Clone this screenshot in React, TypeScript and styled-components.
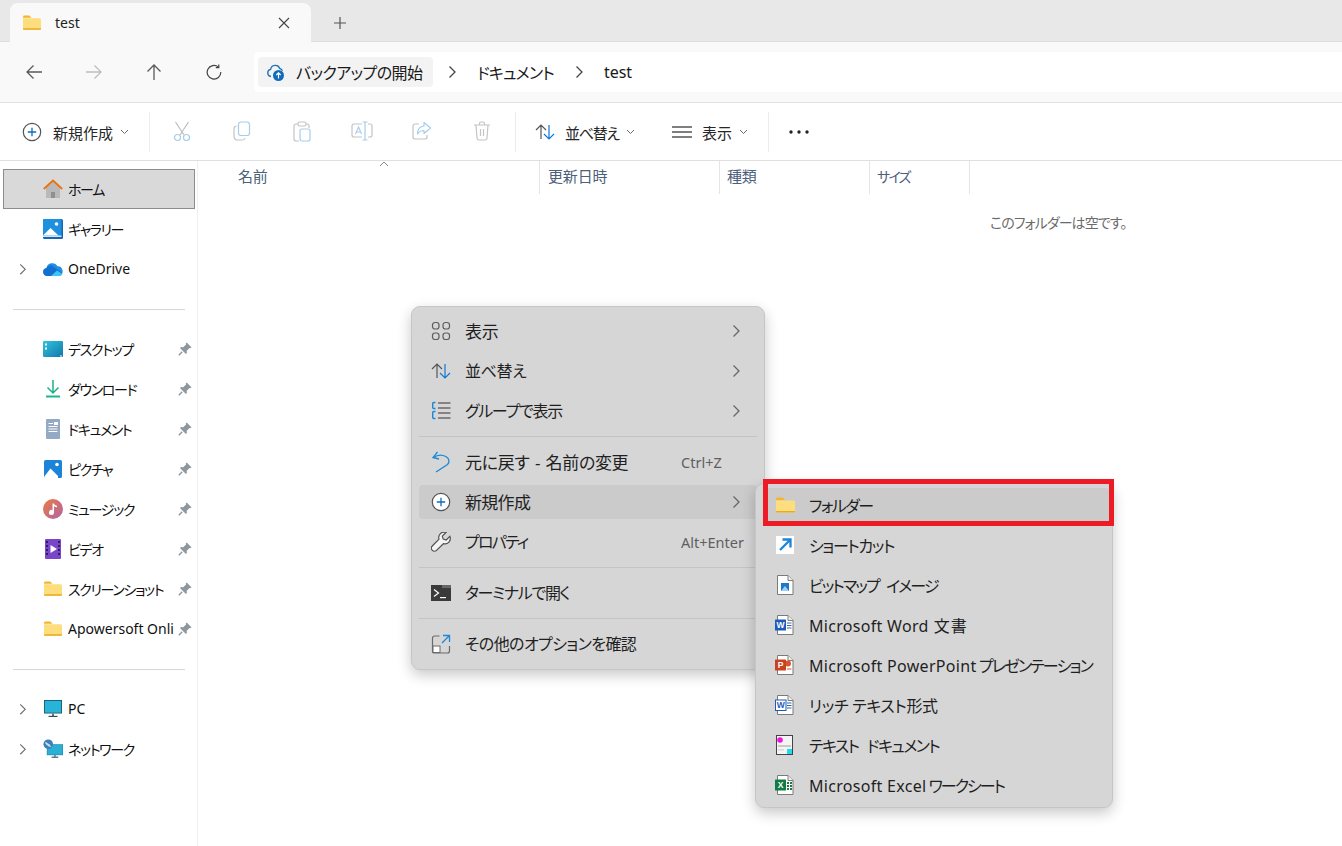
import React from 'react';
import styled, { createGlobalStyle } from 'styled-components';

const GlobalStyle = createGlobalStyle`
  html, body {
    margin: 0;
    padding: 0;
    overflow: hidden;
    background: #fff;
  }
  body {
    font-family: "Noto Sans", "Noto Sans CJK JP", sans-serif;
    font-feature-settings: "palt";
    color: #1a1a1a;
  }
`;

const Window = styled.div`
  position: relative;
  width: 1342px;
  height: 846px;
  display: flex;
  flex-direction: column;
  overflow: hidden;
`;

const TabBar = styled.div`
  height: 42px;
  flex: none;
  box-sizing: border-box;
  background: #e8e8e8;
  padding: 3px 0 0 10px;
  display: flex;
  align-items: stretch;
  border-bottom: 1px solid #dedede;
`;

const Tab = styled.div`
  width: 301px;
  height: 39px;
  box-sizing: border-box;
  background: #f9f9f9;
  border-radius: 8px 8px 0 0;
  padding: 0 21px 0 13px;
  display: flex;
  align-items: center;
`;

const TabTitle = styled.span`
  font-size: 14px;
  margin-left: 14px;
  flex: 1;
  color: #222;
`;

const NewTab = styled.div`
  margin-left: 20px;
  width: 18px;
  display: flex;
  align-items: center;
  justify-content: center;
  height: 39px;
`;

const NavBar = styled.div`
  height: 61px;
  flex: none;
  box-sizing: border-box;
  background: #f9f9f9;
  border-bottom: 1px solid #e0e0e0;
  display: flex;
  align-items: center;
  padding-left: 4px;
`;

const NavButton = styled.div`
  width: 60px;
  height: 40px;
  display: flex;
  align-items: center;
  justify-content: center;
`;

const AddressBar = styled.div`
  margin-left: 10px;
  flex: 1;
  height: 40px;
  background: #fff;
  border-radius: 4px 0 0 4px;
  display: flex;
  align-items: center;
  padding-left: 4px;
`;

const BackupPill = styled.div`
  width: 175px;
  height: 30px;
  box-sizing: border-box;
  background: #f3f3f3;
  border-radius: 4px;
  display: flex;
  align-items: center;
  padding-left: 8px;
  gap: 10px;
  font-size: 16px;
  letter-spacing: -0.6px;
  white-space: nowrap;
`;

const Crumb = styled.span<{ $left: number; $track?: number }>`
  margin-left: ${({ $left }) => $left}px;
  font-size: 16px;
  letter-spacing: ${({ $track = -0.8 }) => $track}px;
  white-space: nowrap;
  display: flex;
  align-items: center;
`;

const ToolBar = styled.div`
  height: 58px;
  flex: none;
  box-sizing: border-box;
  background: #fff;
  border-bottom: 1px solid #e0e0e0;
  display: flex;
  align-items: center;
  font-size: 15px;
`;

const ToolLabel = styled.div<{ $left: number; $width: number }>`
  margin-left: ${({ $left }) => $left}px;
  width: ${({ $width }) => $width}px;
  flex: none;
  display: flex;
  align-items: center;
  white-space: nowrap;
  color: #262626;
`;

const ToolText = styled.span<{ $gap: number; $track?: number }>`
  margin-left: ${({ $gap }) => $gap}px;
  margin-right: 7px;
  padding-top: 2px;
  letter-spacing: ${({ $track = 0 }) => $track}px;
`;

const ToolDivider = styled.div<{ $left: number }>`
  margin-left: ${({ $left }) => $left}px;
  width: 1px;
  height: 40px;
  flex: none;
  background: #ececec;
`;

const ToolIcons = styled.div`
  display: flex;
  flex: none;
  padding: 0 3px 0 2px;
`;

const ToolIcon = styled.div`
  width: 60px;
  flex: none;
  display: flex;
  justify-content: center;
`;

const Body = styled.div`
  flex: 1;
  display: flex;
  min-height: 0;
`;

const Sidebar = styled.nav`
  width: 198px;
  flex: none;
  box-sizing: border-box;
  padding-top: 8px;
  border-right: 1px solid #f0f0f0;
`;

const SideRow = styled.div<{ $active?: boolean; $latin?: boolean }>`
  height: 40px;
  box-sizing: border-box;
  margin-left: 3px;
  width: 192px;
  position: relative;
  display: flex;
  align-items: center;
  padding-left: ${({ $active }) => ($active ? 39 : 40)}px;
  font-size: 14px;
  letter-spacing: ${({ $latin }) => ($latin ? 0 : -1.35)}px;
  white-space: nowrap;
  color: #111;
  background: ${({ $active }) => ($active ? '#d9d9d9' : 'transparent')};
  border: ${({ $active }) => ($active ? '1px solid #8c8c8c' : 'none')};
`;

const SideIcon = styled.span`
  width: 20px;
  height: 20px;
  flex: none;
  margin-right: 5px;
  display: flex;
  align-items: center;
  justify-content: center;
`;

const SideLabel = styled.span`
  padding-bottom: 1px;
`;

const Expander = styled.span`
  position: absolute;
  left: 15px;
  top: 14px;
  display: flex;
`;

const PinMark = styled.span`
  position: absolute;
  right: 3px;
  top: 13px;
  display: flex;
`;

const SideRule = styled.div`
  height: 40px;
  display: flex;
  align-items: center;
  &::after {
    content: '';
    margin-left: 13px;
    width: 172px;
    height: 1px;
    background: #d6d6d6;
  }
`;

const Content = styled.main`
  flex: 1;
  min-width: 0;
`;

const Columns = styled.div`
  position: relative;
  display: grid;
  grid-template-columns: 342px 180px 150px 100px;
  height: 33px;
`;

const Column = styled.div<{ $pad: number; $track?: number; $size?: number }>`
  box-sizing: border-box;
  border-right: 1px solid #e5e5e5;
  display: flex;
  align-items: center;
  padding: 0 0 4px ${({ $pad }) => $pad}px;
  font-size: ${({ $size = 15 }) => $size}px;
  color: #4c607a;
  letter-spacing: ${({ $track = -0.15 }) => $track}px;
`;

const SortCaret = styled.span`
  position: absolute;
  left: 181px;
  top: 0;
  display: flex;
`;

const EmptyNote = styled.div`
  padding: 18px 0 0 792px;
  font-size: 14px;
  color: #6b6b6b;
  letter-spacing: -0.9px;
  white-space: nowrap;
`;

const Menu = styled.div`
  position: absolute;
  box-sizing: border-box;
  background: #d6d6d6;
  border-radius: 9px;
  border: 1px solid #c6c6c6;
  box-shadow: 0 5px 14px rgba(0, 0, 0, 0.22);
  display: flex;
  flex-direction: column;
  font-size: 16px;
  color: #1f1f1f;
  white-space: nowrap;
`;

const MainMenu = styled(Menu)`
  left: 411px;
  top: 306px;
  width: 354px;
  height: 364px;
  padding: 7px 7px 0;
  gap: 6px;
`;

const SubMenu = styled(Menu)`
  left: 755px;
  top: 483px;
  width: 358px;
  height: 325px;
  padding: 4px 2px 0 7px;
  gap: 6px;
`;

const MenuRow = styled.div<{ $on?: boolean; $marked?: boolean }>`
  position: relative;
  height: 34px;
  flex: none;
  display: grid;
  grid-template-columns: 46px 1fr 76px;
  align-items: center;
  border-radius: 4px;
  background: ${({ $on }) => ($on ? '#cbcbcb' : 'transparent')};
  ${({ $marked }) =>
    $marked &&
    `&::after {
      content: '';
      position: absolute;
      box-sizing: border-box;
      left: 0;
      right: -4px;
      top: -9px;
      bottom: -4px;
      border: 5px solid #ed1c24;
    }`}
`;

const SubRow = styled(MenuRow)`
  grid-template-columns: 46px 1fr;
`;

const MenuIcon = styled.span`
  width: 22px;
  height: 22px;
  margin-left: 11px;
  display: flex;
  align-items: center;
  justify-content: center;
`;

const MenuLabel = styled.span<{ $track?: number; $word?: number; $lift?: number; $size?: number }>`
  font-size: ${({ $size = 16 }) => $size}px;
  letter-spacing: ${({ $track = -0.35 }) => $track}px;
  word-spacing: ${({ $word = 0 }) => $word}px;
  padding-bottom: ${({ $lift = 0 }) => $lift}px;
`;

const Latin = styled.span`
  letter-spacing: 0.3px;
`;

const Shortcut = styled.span`
  font-size: 14.5px;
  color: #5f5f5f;
  letter-spacing: 0;
`;

const MenuChevron = styled.span`
  padding-left: 50px;
  display: flex;
`;

const MenuRule = styled.div`
  height: 1px;
  flex: none;
  margin: 2px 0;
  background: #c4c4c4;
`;

type IconProps = { size?: number };

const Chevron = ({ color = '#6b6b6b', size = 10 }: { color?: string; size?: number }) => (
  <svg width={size} height={size * 1.4} viewBox="0 0 10 14" fill="none">
    <path d="M2.5 1.5 8 7l-5.5 5.5" stroke={color} strokeWidth="1.3" />
  </svg>
);

const SmallDown = () => (
  <svg width="9" height="6" viewBox="0 0 9 6" fill="none">
    <path d="M1 1l3.5 3.5L8 1" stroke="#6a6a6a" strokeWidth="1" />
  </svg>
);

const Folder = ({ size = 18 }: IconProps) => (
  <svg width={size} height={size * 0.84} viewBox="0 0 19 16">
    <path d="M0 2a1.5 1.5 0 0 1 1.5-1.5h5L9 3H0z" fill="#f4b52a" />
    <path d="M0 3.5h17.5A1.5 1.5 0 0 1 19 5v9.5a1 1 0 0 1-1 1H1a1 1 0 0 1-1-1z" fill="#fedd7c" />
    <path d="M0 14h19v.7a.9.9 0 0 1-.9.8H.9a.9.9 0 0 1-.9-.8z" fill="#e9ab21" />
  </svg>
);

const Close = () => (
  <svg width="12" height="12" viewBox="0 0 12 12" fill="none">
    <path d="M1 1l10 10M11 1 1 11" stroke="#444" strokeWidth="1.1" />
  </svg>
);

const Plus = () => (
  <svg width="12" height="12" viewBox="0 0 12 12" fill="none">
    <path d="M6 0v12M0 6h12" stroke="#555" strokeWidth="1.2" />
  </svg>
);

const ArrowLeft = ({ color = '#5a5a5a' }: { color?: string }) => (
  <svg width="18" height="16" viewBox="0 0 18 16" fill="none">
    <path d="M17 8H2M8.5 1.5 2 8l6.5 6.5" stroke={color} strokeWidth="1.3" />
  </svg>
);

const ArrowRight = () => (
  <svg width="18" height="16" viewBox="0 0 18 16" fill="none">
    <path d="M1 8h15M9.5 1.5 16 8l-6.5 6.5" stroke="#bdbdbd" strokeWidth="1.3" />
  </svg>
);

const ArrowUp = () => (
  <svg width="16" height="18" viewBox="0 0 16 18" fill="none">
    <path d="M8 17V2M1.5 8.5 8 2l6.5 6.5" stroke="#5a5a5a" strokeWidth="1.3" />
  </svg>
);

const Refresh = () => (
  <svg width="16" height="16" viewBox="0 0 16 16" fill="none">
    <path d="M12.4 3.1A6.8 6.8 0 1 0 14.8 8" stroke="#444" strokeWidth="1.2" />
    <path d="M12.8.6v3h-3" stroke="#444" strokeWidth="1.2" />
  </svg>
);

const CloudUp = () => (
  <svg width="20" height="20" viewBox="0 0 20 20" fill="none">
    <path d="M5 14.5a3.6 3.6 0 0 1-.4-7.1 4.8 4.8 0 0 1 9.2-.9 3.6 3.6 0 0 1 2.6 2.2" stroke="#1f6fb8" strokeWidth="1.3" />
    <circle cx="12.5" cy="13.5" r="5.5" fill="#0f6cbd" />
    <path d="M12.5 16.5v-5.5M10.3 13l2.2-2.2 2.2 2.2" stroke="#fff" strokeWidth="1.2" />
  </svg>
);

const PlusCircle = ({ fill = 'none' }: { fill?: string }) => (
  <svg width="20" height="20" viewBox="0 0 20 20" fill="none">
    <circle cx="10" cy="10" r="8.7" stroke="#555" strokeWidth="1.2" fill={fill} />
    <path d="M10 5.8v8.4M5.8 10h8.4" stroke="#0f6cbd" strokeWidth="1.3" />
  </svg>
);

const Scissors = () => (
  <svg width="18" height="21" viewBox="0 0 18 21" fill="none">
    <path d="M2.5 1 11 14M15.5 1 7 14" stroke="#bdbdbd" strokeWidth="1.2" />
    <circle cx="4.5" cy="16.5" r="3" stroke="#a5cdec" strokeWidth="1.2" />
    <circle cx="13.5" cy="16.5" r="3" stroke="#a5cdec" strokeWidth="1.2" />
  </svg>
);

const Copy = () => (
  <svg width="18" height="20" viewBox="0 0 18 20" fill="none">
    <rect x="5.5" y="1" width="11" height="13.5" rx="2.5" stroke="#a5cdec" strokeWidth="1.2" />
    <path d="M3.5 5A2.5 2.5 0 0 0 1 7.5v8A3.5 3.5 0 0 0 4.5 19h5a2.5 2.5 0 0 0 2.5-2" stroke="#c4c4c4" strokeWidth="1.2" />
  </svg>
);

const Paste = () => (
  <svg width="18" height="21" viewBox="0 0 18 21" fill="none">
    <path d="M5 3H3a2 2 0 0 0-2 2v13a2 2 0 0 0 2 2h3M13 3h1a2 2 0 0 1 2 2v2" stroke="#c4c4c4" strokeWidth="1.2" />
    <rect x="5" y="1" width="8" height="4" rx="1.5" stroke="#c4c4c4" strokeWidth="1.2" />
    <rect x="7" y="8" width="10" height="12" rx="2" stroke="#a5cdec" strokeWidth="1.2" />
  </svg>
);

const Rename = () => (
  <svg width="22" height="20" viewBox="0 0 22 20" fill="none">
    <path d="M11 3H3a2 2 0 0 0-2 2v9a2 2 0 0 0 2 2h8M17 3h2a2 2 0 0 1 2 2v9a2 2 0 0 1-2 2h-2" stroke="#c4c4c4" strokeWidth="1.2" />
    <path d="M14 1v18M11.5 1h5M11.5 19h5" stroke="#a5cdec" strokeWidth="1.2" />
    <path d="M4.5 13 7.5 6l3 7M5.5 11h4" stroke="#a5cdec" strokeWidth="1.1" />
  </svg>
);

const Share = () => (
  <svg width="20" height="20" viewBox="0 0 20 20" fill="none">
    <path d="M7 3H3a2 2 0 0 0-2 2v11a2 2 0 0 0 2 2h10a2 2 0 0 0 2-2v-2" stroke="#c4c4c4" strokeWidth="1.2" />
    <path d="M12 1.5 18.5 7 12 12.5V9.5C9 9.5 7 10.5 5.5 13c0-4.5 2.5-7.500 6.5-8z" stroke="#a5cdec" strokeWidth="1.2" strokeLinejoin="round" />
  </svg>
);

const Trash = () => (
  <svg width="18" height="20" viewBox="0 0 18 20" fill="none">
    <path d="M1 4h16M6.5 4V2.5A1.5 1.5 0 0 1 8 1h2a1.5 1.5 0 0 1 1.5 1.5V4" stroke="#c4c4c4" strokeWidth="1.2" />
    <path d="M3 4l1 13.2A2 2 0 0 0 6 19h6a2 2 0 0 0 2-1.8L15 4" stroke="#c4c4c4" strokeWidth="1.2" />
    <path d="M7.5 8v7M10.5 8v7" stroke="#c4c4c4" strokeWidth="1.2" />
  </svg>
);

const SortArrows = () => (
  <svg width="20" height="18" viewBox="0 0 20 18" fill="none">
    <path d="M6 16V2M1 7l5-5 5 5" stroke="#555" strokeWidth="1.2" />
    <path d="M14 2v14M9 11l5 5 5-5" stroke="#0f78d4" strokeWidth="1.2" />
  </svg>
);

const Lines = () => (
  <svg width="20" height="12" viewBox="0 0 20 12" fill="none">
    <path d="M0 1h20M0 6h20M0 11h20" stroke="#555" strokeWidth="1.3" />
  </svg>
);

const Dots = () => (
  <svg width="20" height="4" viewBox="0 0 20 4">
    <circle cx="2" cy="2" r="1.7" fill="#222" />
    <circle cx="10" cy="2" r="1.7" fill="#222" />
    <circle cx="18" cy="2" r="1.7" fill="#222" />
  </svg>
);

const Home = () => (
  <svg width="20" height="20" viewBox="0 0 20 20" fill="none">
    <path d="M3 9 10 2.5 17 9v10H3z" fill="#b9b9b9" />
    <path d="M8 19v-6h4v6z" fill="#8f8f8f" />
    <path d="M.8 10 10 1.5 19.2 10" stroke="#e8740f" strokeWidth="1.9" />
  </svg>
);

const Gallery = () => (
  <svg width="20" height="20" viewBox="0 0 20 20">
    <rect width="20" height="20" rx="1.5" fill="#1567b3" />
    <rect width="18.5" height="18" rx="1" fill="#1f8fe0" />
    <circle cx="13.5" cy="5" r="1.8" fill="#fff" />
    <path d="M0 16.5 7.5 9l8 7.5z" fill="#fff" />
    <path d="M0 16.5h18.5V18H0z" fill="#cfe6f8" />
  </svg>
);

const Cloud = () => (
  <svg width="20" height="14" viewBox="0 0 20 14">
    <path d="M4 14a4 4 0 0 1-.6-7.9A6 6 0 0 1 14.5 4.2 5 5 0 0 1 16 14z" fill="#1c8fe8" />
    <path d="M4 14a4 4 0 0 1-2.9-6.7L8 3l11.2 8A4.5 4.5 0 0 1 16 14z" fill="#0f5fc4" opacity=".65" />
    <path d="M8 14 14 8.5l5.5 3.5A4 4 0 0 1 16 14z" fill="#3ec4f5" />
  </svg>
);

const Desktop = () => (
  <svg width="20" height="16" viewBox="0 0 20 16">
    <defs>
      <linearGradient id="deskGrad" x1="0" y1="0" x2="1" y2="1">
        <stop offset="0" stopColor="#2fc5dc" />
        <stop offset="1" stopColor="#1277ab" />
      </linearGradient>
    </defs>
    <rect width="20" height="16" rx="1" fill="url(#deskGrad)" />
    <rect x="2" y="2.5" width="2" height="2" fill="#fff" />
    <rect x="2" y="6.5" width="2" height="2" fill="#fff" />
    <rect x="17" y="14.5" width="2" height="1" fill="#fff" />
  </svg>
);

const Download = () => (
  <svg width="16" height="18" viewBox="0 0 16 18" fill="none">
    <path d="M8 0v12.5M2.5 7.5 8 13l5.5-5.5" stroke="#1fae87" strokeWidth="1.5" />
    <path d="M1 16.5h14" stroke="#1fb58f" strokeWidth="2" />
  </svg>
);

const DocIcon = () => (
  <svg width="14" height="20" viewBox="0 0 14 20">
    <rect width="14" height="20" rx="1" fill="#93a9c4" />
    <path d="M8 3h4v3H8z" fill="#fff" />
    <path d="M2.5 4H7v1H2.5zM2.5 7h9v1h-9zM2.5 9.5h9v1h-9zM2.5 12h9v1h-9z" fill="#fff" />
  </svg>
);

const Pictures = () => (
  <svg width="18" height="18" viewBox="0 0 18 18">
    <rect width="18" height="18" rx="1.5" fill="#1b84d8" />
    <circle cx="13" cy="4.5" r="1.8" fill="#fff" />
    <path d="M0 17 6.5 8.5 14 16v2H1a1 1 0 0 1-1-1z" fill="#fff" />
  </svg>
);

const Music = () => (
  <svg width="20" height="20" viewBox="0 0 20 20">
    <defs>
      <linearGradient id="musicGrad" x1="0" y1="0" x2="1" y2="1">
        <stop offset="0" stopColor="#ea7b3f" />
        <stop offset="1" stopColor="#b364a8" />
      </linearGradient>
    </defs>
    <circle cx="10" cy="10" r="10" fill="url(#musicGrad)" />
    <path d="M9.5 4.5H11c.3 1.5 1.5 2 3 2.2v1.5c-1.2 0-2.2-.4-3-1v6.300a2.5 2.5 0 1 1-1.5-2.3z" fill="#fff" />
  </svg>
);

const Video = () => (
  <svg width="16" height="20" viewBox="0 0 16 20">
    <rect width="16" height="20" rx="1" fill="#7a45c9" />
    <path d="M5.5 6 12 10l-6.5 4z" fill="#fff" />
    <path d="M1 2h2v2H1zM1 6h2v2H1zM1 10h2v2H1zM1 14h2v2H1zM13 2h2v2h-2zM13 6h2v2h-2zM13 10h2v2h-2zM13 14h2v2h-2z" fill="#2f1c63" />
  </svg>
);

const Pin = () => (
  <svg width="14" height="14" viewBox="0 0 14 14">
    <path d="M8.7.6 13.4 5.300 12.500 6.200 11.600 5.900 8.700 8.800 8.900 11 7.900 12 2 6.100 3 5.100 5.200 5.300 8.100 2.400 7.800 1.500z" fill="#8f979e" />
    <path d="M4.2 9.800.8 13.200" stroke="#8f979e" strokeWidth="1.4" />
  </svg>
);

const Monitor = ({ size = 18 }: IconProps) => (
  <svg width={size} height={size} viewBox="0 0 18 18">
    <rect width="18" height="13.5" fill="#1f4f63" />
    <rect x=".8" y=".8" width="16.4" height="11.9" fill="#26b4d8" />
    <path d="M8 13.5h2V16H8z" fill="#5f7784" />
    <path d="M4.5 15.8h9V17h-9z" fill="#33505e" />
  </svg>
);

const Network = () => (
  <svg width="21" height="20" viewBox="0 0 21 20">
    <rect x="4" y="5" width="17" height="11.5" fill="#1f8db4" />
    <rect x="4.7" y="5.7" width="15.6" height="10.1" fill="#2ab0d4" />
    <path d="M11.5 16.5h2V18h-2z" fill="#5f7784" />
    <path d="M9 18h7v1.2H9z" fill="#33505e" />
    <circle cx="5.5" cy="5" r="5" fill="#3f7fb5" />
    <path d="M2.5 2.5 6.5 5 9 8l-3-.5-3.500-3z" fill="#cfe0ee" />
  </svg>
);

const Grid = () => (
  <svg width="20" height="20" viewBox="0 0 20 20" fill="none" stroke="#5d5d5d" strokeWidth="1.2">
    <rect x="1.5" y="1.5" width="6.5" height="6.5" rx="2.5" />
    <rect x="12" y="1.5" width="6.5" height="6.5" rx="2.5" />
    <rect x="1.5" y="12" width="6.5" height="6.5" rx="2.5" />
    <rect x="12" y="12" width="6.5" height="6.5" rx="2.5" />
  </svg>
);

const GroupList = () => (
  <svg width="20" height="20" viewBox="0 0 20 20" fill="none">
    <path d="M4.5 1.5H2.700a1 1 0 0 0-1 1v4a1 1 0 0 0 1 1h1.800M4.500 10.500H2.700a1 1 0 0 0-1 1v5a1 1 0 0 0 1 1h1.800" stroke="#1c86d8" strokeWidth="1.4" />
    <path d="M7 2h12.500M7 7h12.500M7 12h12.500M7 17h12.500" stroke="#6a6a6a" strokeWidth="1.3" />
  </svg>
);

const Undo = () => (
  <svg width="20" height="22" viewBox="0 0 20 22" fill="none">
    <path d="M6.5 1 2 6.5 8 8" stroke="#1c86d8" strokeWidth="1.3" />
    <path d="M2.5 6.5C6 4 11 3.500 14.800 5.500c3.700 2 4 5.500 1.700 8L5 21" stroke="#1c86d8" strokeWidth="1.3" />
  </svg>
);

const Wrench = () => (
  <svg width="20" height="20" viewBox="0 0 20 20" fill="#f4f4f4">
    <path d="M18.8 4.300 15.200 8l-3-.9-.9-3L15 .5a5.400 5.400 0 0 0-7 6.700L1.300 14a2.800 2.800 0 0 0 0 4.300 2.900 2.900 0 0 0 4.200.1l6.900-6.700a5.400 5.400 0 0 0 6.400-7.400z" stroke="#505050" strokeWidth="1.2" />
  </svg>
);

const Terminal = () => (
  <svg width="20" height="16" viewBox="0 0 20 16">
    <rect width="20" height="16" fill="#3a3a3a" />
    <rect x="11" width="9" height="3" fill="#666" />
    <path d="M3 4.5 7.500 8 3 11.500" fill="none" stroke="#fff" strokeWidth="1.2" />
    <path d="M9 12h6v1.200H9z" fill="#fff" />
  </svg>
);

const MoreOptions = () => (
  <svg width="20" height="20" viewBox="0 0 20 20" fill="none">
    <path d="M8.5 2h-5a2 2 0 0 0-2 2v13a2 2 0 0 0 2 2h13a2 2 0 0 0 2-2v-5" stroke="#6a6a6a" strokeWidth="1.2" />
    <rect x="2" y="12" width="7" height="6.5" fill="#fff" stroke="#6a6a6a" strokeWidth="1" />
    <path d="M12 1.5h6.500V8M18.500 1.500 11 9" stroke="#1c86d8" strokeWidth="1.3" />
  </svg>
);

const ShortcutArrow = () => (
  <svg width="18" height="18" viewBox="0 0 18 18">
    <rect width="18" height="18" fill="#fff" />
    <path d="M4 14 13.500 4.500M6.500 3.500h8v8" fill="none" stroke="#1b86d8" strokeWidth="2.3" />
  </svg>
);

const PageBase = ({ children }: { children?: React.ReactNode }) => (
  <svg width="20" height="20" viewBox="0 0 20 20">
    <path d="M2.5.5H13l5 5v14H2.500z" fill="#fff" stroke="#7b7b7b" strokeWidth="1" />
    <path d="M13 .5v5h5" fill="#eee" stroke="#7b7b7b" strokeWidth="1" />
    {children}
  </svg>
);

const Bitmap = () => (
  <PageBase>
    <rect x="6" y="8" width="8" height="8" fill="#1f78c8" />
    <path d="M6 16 10 11l4 5z" fill="#9cd0f5" />
  </PageBase>
);

const WordDoc = () => (
  <PageBase>
    <path d="M12 8h4.500M12 10.500h4.500M12 13h4.500" stroke="#2f65b5" strokeWidth="1" />
    <rect x="0" y="4.500" width="11" height="11" rx=".5" fill="#1c5bb8" />
    <text x="5.5" y="13" fontSize="8.5" fontWeight="700" fill="#fff" textAnchor="middle" fontFamily="Liberation Sans">W</text>
  </PageBase>
);

const PptDoc = () => (
  <PageBase>
    <circle cx="13" cy="8.500" r="3" fill="#d9552b" />
    <path d="M12 14h4.500" stroke="#d9552b" strokeWidth="1" />
    <rect x="0" y="4.500" width="11" height="11" rx=".5" fill="#c8421e" />
    <text x="5.5" y="13" fontSize="8.5" fontWeight="700" fill="#fff" textAnchor="middle" fontFamily="Liberation Sans">P</text>
  </PageBase>
);

const RtfDoc = () => (
  <PageBase>
    <path d="M12 8h4.500M12 10.500h4.500M12 13h4.500" stroke="#2f65b5" strokeWidth="1" />
    <rect x=".5" y="5" width="10.500" height="10.500" fill="#fff" stroke="#1c5bb8" strokeWidth="1" />
    <text x="5.7" y="13" fontSize="8.5" fontWeight="700" fill="#1c5bb8" textAnchor="middle" fontFamily="Liberation Sans">W</text>
  </PageBase>
);

const TextDoc = () => (
  <svg width="18" height="20" viewBox="0 0 18 20">
    <rect x=".5" y=".5" width="16" height="19" fill="#f4f4f4" stroke="#444" strokeWidth="1" />
    <circle cx="4" cy="5" r="2.8" fill="#f012e0" />
    <rect x="2" y="10" width="13" height="2" fill="#c9c9c9" />
    <rect x="2" y="14" width="6" height="1.5" fill="#d8d8d8" />
    <rect x="11" y="14" width="5" height="5" fill="#18dff0" />
  </svg>
);

const ExcelDoc = () => (
  <PageBase>
    <path d="M12 7h2v2h-2zM15 7h2v2h-2zM12 10h2v2h-2zM15 10h2v2h-2zM12 13h2v2h-2zM15 13h2v2h-2z" fill="#1d7a46" />
    <rect x="0" y="4.500" width="11" height="11" rx=".5" fill="#107c41" />
    <text x="5.5" y="13" fontSize="8.5" fontWeight="700" fill="#fff" textAnchor="middle" fontFamily="Liberation Sans">X</text>
  </PageBase>
);

type SideItem = {
  label?: string;
  icon?: React.ReactNode;
  pinned?: boolean;
  expandable?: boolean;
  active?: boolean;
  latin?: boolean;
};

const sideItems: SideItem[] = [
  { label: 'ホーム', icon: <Home />, active: true },
  { label: 'ギャラリー', icon: <Gallery /> },
  { label: 'OneDrive', icon: <Cloud />, expandable: true, latin: true },
  {},
  { label: 'デスクトップ', icon: <Desktop />, pinned: true },
  { label: 'ダウンロード', icon: <Download />, pinned: true },
  { label: 'ドキュメント', icon: <DocIcon />, pinned: true },
  { label: 'ピクチャ', icon: <Pictures />, pinned: true },
  { label: 'ミュージック', icon: <Music />, pinned: true },
  { label: 'ビデオ', icon: <Video />, pinned: true },
  { label: 'スクリーンショット', icon: <Folder />, pinned: true },
  { label: 'Apowersoft Onli', icon: <Folder />, pinned: true, latin: true },
  {},
  { label: 'PC', icon: <Monitor />, expandable: true, latin: true },
  { label: 'ネットワーク', icon: <Network />, expandable: true },
];

type MenuItem = {
  label?: string;
  icon?: React.ReactNode;
  more?: boolean;
  keys?: string;
  on?: boolean;
  word?: number;
  track?: number;
  size?: number;
};

const menuItems: MenuItem[] = [
  { label: '表示', icon: <Grid />, more: true, size: 17 },
  { label: '並べ替え', icon: <SortArrows />, more: true },
  { label: 'グループで表示', icon: <GroupList />, more: true, track: -1.25 },
  {},
  { label: '元に戻す - 名前の変更', icon: <Undo />, keys: 'Ctrl+Z', word: 1.5, size: 17 },
  { label: '新規作成', icon: <PlusCircle fill="#fff" />, more: true, on: true, size: 17, track: -0.7 },
  { label: 'プロパティ', icon: <Wrench />, keys: 'Alt+Enter', track: -1.75 },
  {},
  { label: 'ターミナルで開く', icon: <Terminal />, track: -1.35 },
  {},
  { label: 'その他のオプションを確認', icon: <MoreOptions />, track: -0.6 },
];

const newItems: { label: React.ReactNode; icon: React.ReactNode; track?: number; word?: number }[] = [
  { label: 'フォルダー', icon: <Folder size={19} />, track: -1.55 },
  { label: 'ショートカット', icon: <ShortcutArrow />, track: -1.35 },
  { label: 'ビットマップ イメージ', icon: <Bitmap />, track: -1.9, word: 5 },
  { label: <><Latin>Microsoft Word</Latin> 文書</>, icon: <WordDoc />, track: 1 },
  { label: <><Latin>Microsoft PowerPoint</Latin> プレゼンテーション</>, icon: <PptDoc />, track: -1.8 },
  { label: 'リッチ テキスト形式', icon: <RtfDoc /> },
  { label: 'テキスト ドキュメント', icon: <TextDoc />, track: -1.6, word: 6 },
  { label: <><Latin>Microsoft Excel</Latin> ワークシート</>, icon: <ExcelDoc />, track: -2 },
];

const App: React.FC = () => (
  <>
    <GlobalStyle />
    <Window>
      <TabBar>
        <Tab>
          <Folder />
          <TabTitle>test</TabTitle>
          <Close />
        </Tab>
        <NewTab>
          <Plus />
        </NewTab>
      </TabBar>
      <NavBar>
        <NavButton><ArrowLeft /></NavButton>
        <NavButton><ArrowRight /></NavButton>
        <NavButton><ArrowUp /></NavButton>
        <NavButton><Refresh /></NavButton>
        <AddressBar>
          <BackupPill>
            <CloudUp />
            バックアップの開始
          </BackupPill>
          <Crumb $left={14}><Chevron color="#444" /></Crumb>
          <Crumb $left={20}>ドキュメント</Crumb>
          <Crumb $left={20}><Chevron color="#444" /></Crumb>
          <Crumb $left={20} $track={0}>test</Crumb>
        </AddressBar>
      </NavBar>
      <ToolBar>
        <ToolLabel $left={22} $width={108}>
          <PlusCircle />
          <ToolText $gap={11}>新規作成</ToolText>
          <SmallDown />
        </ToolLabel>
        <ToolDivider $left={19} />
        <ToolIcons>
          <ToolIcon><Scissors /></ToolIcon>
          <ToolIcon><Copy /></ToolIcon>
          <ToolIcon><Paste /></ToolIcon>
          <ToolIcon><Rename /></ToolIcon>
          <ToolIcon><Share /></ToolIcon>
          <ToolIcon><Trash /></ToolIcon>
        </ToolIcons>
        <ToolDivider $left={0} />
        <ToolLabel $left={19} $width={110}>
          <SortArrows />
          <ToolText $gap={10} $track={-1.3}>並べ替え</ToolText>
          <SmallDown />
        </ToolLabel>
        <ToolLabel $left={27} $width={96}>
          <Lines />
          <ToolText $gap={10}>表示</ToolText>
          <SmallDown />
        </ToolLabel>
        <ToolDivider $left={0} />
        <ToolLabel $left={20} $width={30}>
          <Dots />
        </ToolLabel>
      </ToolBar>
      <Body>
        <Sidebar>
          {sideItems.map((item, i) =>
            item.label ? (
              <SideRow key={i} $active={item.active} $latin={item.latin}>
                {item.expandable && (
                  <Expander>
                    <Chevron color="#707070" size={9} />
                  </Expander>
                )}
                <SideIcon>{item.icon}</SideIcon>
                <SideLabel>{item.label}</SideLabel>
                {item.pinned && (
                  <PinMark>
                    <Pin />
                  </PinMark>
                )}
              </SideRow>
            ) : (
              <SideRule key={i} />
            ),
          )}
        </Sidebar>
        <Content>
          <Columns>
            <Column $pad={40}>名前</Column>
            <Column $pad={8}>更新日時</Column>
            <Column $pad={7}>種類</Column>
            <Column $pad={7} $size={14} $track={-1.8}>サイズ</Column>
            <SortCaret>
              <svg width="10" height="6" viewBox="0 0 10 6" fill="none">
                <path d="M1 5 5 1l4 4" stroke="#8a8a8a" strokeWidth="1" />
              </svg>
            </SortCaret>
          </Columns>
          <EmptyNote>このフォルダーは空です。</EmptyNote>
        </Content>
      </Body>
      <MainMenu>
        {menuItems.map((item, i) =>
          item.label ? (
            <MenuRow key={i} $on={item.on}>
              <MenuIcon>{item.icon}</MenuIcon>
              <MenuLabel $track={item.track} $word={item.word} $size={item.size} $lift={2}>{item.label}</MenuLabel>
              {item.more && (
                <MenuChevron>
                  <Chevron color="#666" />
                </MenuChevron>
              )}
              {item.keys && <Shortcut>{item.keys}</Shortcut>}
            </MenuRow>
          ) : (
            <MenuRule key={i} />
          ),
        )}
      </MainMenu>
      <SubMenu>
        {newItems.map((item, i) => (
          <SubRow key={i} $on={i === 0} $marked={i === 0}>
            <MenuIcon>{item.icon}</MenuIcon>
            <MenuLabel $track={item.track} $word={item.word}>{item.label}</MenuLabel>
          </SubRow>
        ))}
      </SubMenu>
    </Window>
  </>
);

export default App;
